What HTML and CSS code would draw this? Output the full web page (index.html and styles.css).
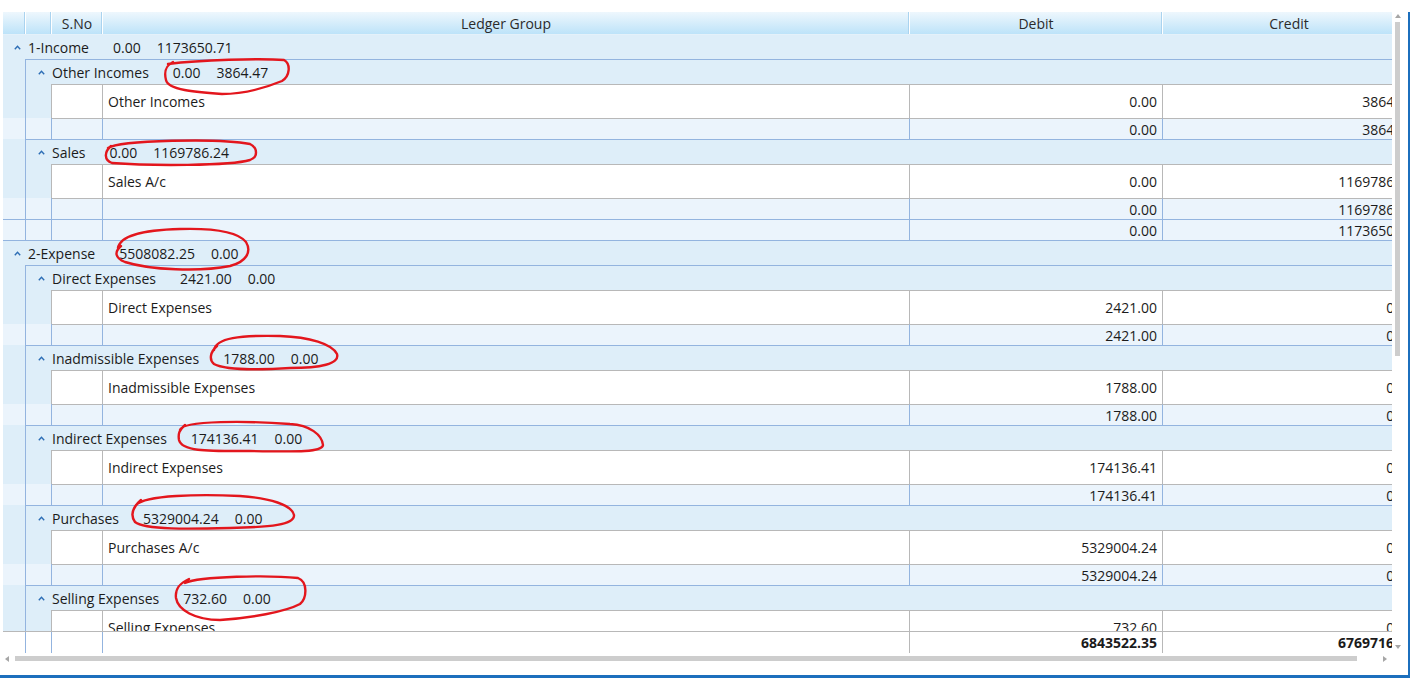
FILE: index.html
```html
<!DOCTYPE html>
<html>
<head>
<meta charset="utf-8">
<link rel="stylesheet" href="styles.css">
</head>
<body>
<div class="frame">
  <div class="area">
    <div class="grid">
      <div class="hdr">
        <div class="hc c0"></div><div class="hc c1"></div><div class="hc sno">S.No</div><div class="hc led">Ledger Group</div><div class="hc deb">Debit</div><div class="hc cre">Credit</div>
      </div>
      <div class="body">
        <div class="row g1 first"><svg class="cap" viewBox="0 0 7 5"><path d="M0.8 4.2 L3.5 1.3 L6.2 4.2"/></svg><span class="lab">1-Income</span><span class="v">0.00</span><span class="v">1173650.71</span></div>

        <div class="row g2"><div class="ind"></div><div class="gc"><svg class="cap" viewBox="0 0 7 5"><path d="M0.8 4.2 L3.5 1.3 L6.2 4.2"/></svg><span class="lab">Other Incomes</span><span class="v">0.00</span><span class="v">3864.47</span></div></div>
        <div class="row data"><div class="ind"></div><div class="ind2"></div><div class="c sno"></div><div class="c led">Other Incomes</div><div class="c deb num">0.00</div><div class="c cre num">3864.47</div></div>
        <div class="row foot"><div class="ind"></div><div class="ind2"></div><div class="c sno"></div><div class="c led"></div><div class="c deb num">0.00</div><div class="c cre num">3864.47</div></div>

        <div class="row g2"><div class="ind"></div><div class="gc"><svg class="cap" viewBox="0 0 7 5"><path d="M0.8 4.2 L3.5 1.3 L6.2 4.2"/></svg><span class="lab">Sales</span><span class="v">0.00</span><span class="v">1169786.24</span></div></div>
        <div class="row data"><div class="ind"></div><div class="ind2"></div><div class="c sno"></div><div class="c led">Sales A/c</div><div class="c deb num">0.00</div><div class="c cre num">1169786.24</div></div>
        <div class="row foot"><div class="ind"></div><div class="ind2"></div><div class="c sno"></div><div class="c led"></div><div class="c deb num">0.00</div><div class="c cre num">1169786.24</div></div>
        <div class="row foot af"><div class="ind"></div><div class="ind2"></div><div class="c sno"></div><div class="c led"></div><div class="c deb num">0.00</div><div class="c cre num">1173650.71</div></div>

        <div class="row g1"><svg class="cap" viewBox="0 0 7 5"><path d="M0.8 4.2 L3.5 1.3 L6.2 4.2"/></svg><span class="lab">2-Expense</span><span class="v">5508082.25</span><span class="v">0.00</span></div>

        <div class="row g2"><div class="ind"></div><div class="gc"><svg class="cap" viewBox="0 0 7 5"><path d="M0.8 4.2 L3.5 1.3 L6.2 4.2"/></svg><span class="lab">Direct Expenses</span><span class="v">2421.00</span><span class="v">0.00</span></div></div>
        <div class="row data"><div class="ind"></div><div class="ind2"></div><div class="c sno"></div><div class="c led">Direct Expenses</div><div class="c deb num">2421.00</div><div class="c cre num">0.00</div></div>
        <div class="row foot"><div class="ind"></div><div class="ind2"></div><div class="c sno"></div><div class="c led"></div><div class="c deb num">2421.00</div><div class="c cre num">0.00</div></div>

        <div class="row g2"><div class="ind"></div><div class="gc"><svg class="cap" viewBox="0 0 7 5"><path d="M0.8 4.2 L3.5 1.3 L6.2 4.2"/></svg><span class="lab">Inadmissible Expenses</span><span class="v">1788.00</span><span class="v">0.00</span></div></div>
        <div class="row data"><div class="ind"></div><div class="ind2"></div><div class="c sno"></div><div class="c led">Inadmissible Expenses</div><div class="c deb num">1788.00</div><div class="c cre num">0.00</div></div>
        <div class="row foot"><div class="ind"></div><div class="ind2"></div><div class="c sno"></div><div class="c led"></div><div class="c deb num">1788.00</div><div class="c cre num">0.00</div></div>

        <div class="row g2"><div class="ind"></div><div class="gc"><svg class="cap" viewBox="0 0 7 5"><path d="M0.8 4.2 L3.5 1.3 L6.2 4.2"/></svg><span class="lab">Indirect Expenses</span><span class="v">174136.41</span><span class="v">0.00</span></div></div>
        <div class="row data"><div class="ind"></div><div class="ind2"></div><div class="c sno"></div><div class="c led">Indirect Expenses</div><div class="c deb num">174136.41</div><div class="c cre num">0.00</div></div>
        <div class="row foot"><div class="ind"></div><div class="ind2"></div><div class="c sno"></div><div class="c led"></div><div class="c deb num">174136.41</div><div class="c cre num">0.00</div></div>

        <div class="row g2"><div class="ind"></div><div class="gc"><svg class="cap" viewBox="0 0 7 5"><path d="M0.8 4.2 L3.5 1.3 L6.2 4.2"/></svg><span class="lab">Purchases</span><span class="v">5329004.24</span><span class="v">0.00</span></div></div>
        <div class="row data"><div class="ind"></div><div class="ind2"></div><div class="c sno"></div><div class="c led">Purchases A/c</div><div class="c deb num">5329004.24</div><div class="c cre num">0.00</div></div>
        <div class="row foot"><div class="ind"></div><div class="ind2"></div><div class="c sno"></div><div class="c led"></div><div class="c deb num">5329004.24</div><div class="c cre num">0.00</div></div>

        <div class="row g2"><div class="ind"></div><div class="gc"><svg class="cap" viewBox="0 0 7 5"><path d="M0.8 4.2 L3.5 1.3 L6.2 4.2"/></svg><span class="lab">Selling Expenses</span><span class="v">732.60</span><span class="v">0.00</span></div></div>
        <div class="row data"><div class="ind"></div><div class="ind2"></div><div class="c sno"></div><div class="c led">Selling Expenses</div><div class="c deb num">732.60</div><div class="c cre num">0.00</div></div>
        <div class="row foot"><div class="ind"></div><div class="ind2"></div><div class="c sno"></div><div class="c led"></div><div class="c deb num">732.60</div><div class="c cre num">0.00</div></div>
      </div>
      <div class="row total"><div class="ind"></div><div class="ind2"></div><div class="c sno"></div><div class="c led"></div><div class="c deb num">6843522.35</div><div class="c cre num">6769716.96</div></div>
      <div class="hscroll">
        <svg class="arr" viewBox="0 0 4 6"><path d="M4 0 L0 3 L4 6Z"/></svg>
        <div class="hthumb"></div>
        <svg class="arr arr-r" viewBox="0 0 4 6"><path d="M0 0 L4 3 L0 6Z"/></svg>
      </div>
    </div>
    <div class="vscroll">
      <svg class="varr" viewBox="0 0 6 4"><path d="M0 4 L3 0 L6 4Z"/></svg>
      <div class="vthumb"></div>
      <svg class="varr varr-d" viewBox="0 0 6 4"><path d="M0 0 L3 4 L6 0Z"/></svg>
    </div>
  </div>
</div>
<div class="bluebar"></div>

<svg class="marks" viewBox="0 0 1410 678">
  <path d="M168 64 C200 60 260 58 284 60 C291 64 290 76 282 81 C265 88 245 94 222 94 C195 92 168 90 166 80 C164 72 165 66 173 62"/>
  <path d="M108 148 C120 140 220 138 250 144 C258 148 258 157 250 160 C230 166 150 166 112 163 C104 160 104 152 111 146"/>
  <path d="M118 248 C120 236 140 230 180 229 C215 228 238 232 246 242 C252 252 246 262 230 266 C200 272 150 270 125 262 C115 258 114 252 121 246"/>
  <path d="M214 350 C216 338 240 335 280 336 C310 337 332 344 337 354 C340 364 320 368 290 368 C260 370 225 370 214 364 C209 360 210 352 217 346"/>
  <path d="M180 430 C182 420 250 421 290 424 C310 425 322 435 323 445 C322 452 300 452 250 451 C210 451 182 452 179 440 C178 434 179 430 185 425"/>
  <path d="M136 505 C145 495 200 494 240 496 C270 498 292 505 294 515 C295 525 270 527 230 528 C190 529 145 530 135 522 C130 515 132 508 141 500"/>
  <path d="M185 583 C200 576 270 575 298 578 C308 582 307 598 300 604 C285 612 250 618 220 620 C195 620 178 610 176 598 C175 590 178 584 189 579"/>
</svg>
</body>
</html>
```

FILE: styles.css
```css
* { box-sizing: border-box; }
html, body { margin: 0; padding: 0; }
body {
  width: 1410px;
  height: 678px;
  background: #fff;
  font-family: "Open Sans", "Noto Sans", sans-serif;
  font-size: 14px;
  color: #1b1b1b;
  overflow: hidden;
  position: relative;
}
.frame { height: 675px; padding: 12px 0 0 3px; }
.area {
  display: flex;
  width: 1407px;
  height: 663px;
  border-right: 2px solid #1c6fbd;
}
.grid {
  width: 1389px;
  display: flex;
  flex-direction: column;
  overflow: hidden;
  flex-shrink: 0;
}
.hdr, .row { display: flex; width: 1413px; flex-shrink: 0; }
.hdr { height: 23px; border-bottom: 1px solid #e4f1fa; }
.hc {
  flex-shrink: 0;
  height: 22px;
  display: flex;
  align-items: center;
  justify-content: center;
  background: linear-gradient(#eef7fd, #bde3f9);
  border-right: 1px solid #fff;
  box-shadow: inset -1px 0 0 #aad3ef;
  color: #2b2b2b;
}
.c0 { width: 23px; }
.c1 { width: 26px; }
.sno { width: 51px; }
.led { width: 807px; }
.deb { width: 253px; }
.cre { width: 253px; }

.body { height: 596px; overflow: hidden; flex-shrink: 0; }

.cap { width: 7px; height: 5px; margin-right: 7px; flex-shrink: 0; }
.cap path { fill: none; stroke: #2c6db5; stroke-width: 1.4; }
.lab { margin-right: 24px; white-space: nowrap; }
.v { white-space: nowrap; }
.v + .v { margin-left: 16px; }

.g1 {
  height: 25px;
  border-top: 1px solid #93b4df;
  background: #deeef9;
  align-items: center;
  padding-left: 11px;
}
.g1.first { height: 24px; border-top: 0; }

.ind {
  width: 23px;
  flex-shrink: 0;
  background: #deeef9;
  border-right: 1px solid #93b4df;
}
.ind2 {
  width: 26px;
  flex-shrink: 0;
  background: #deeef9;
  border-right: 1px solid #b8b8b8;
}

.g2 { height: 25px; }
.g2 .gc {
  flex: 1;
  display: flex;
  align-items: center;
  border-top: 1px solid #93b4df;
  background: #deeef9;
  padding-left: 12px;
}

.c {
  flex-shrink: 0;
  display: flex;
  align-items: center;
  padding: 0 5px;
  white-space: nowrap;
  overflow: hidden;
}
.num { justify-content: flex-end; }
.c.cre { padding-right: 1px; }

.data { height: 34px; }
.data .c {
  background: #fff;
  border-top: 1px solid #b8b8b8;
  border-right: 1px solid #b8b8b8;
}

.foot { height: 21px; }
.foot .ind, .foot .ind2 { background: #ebf4fc; border-right-color: #93b4df; }
.foot .c {
  background: #ebf4fc;
  border-top: 1px solid #b8b8b8;
  border-right: 1px solid #93b4df;
}
.foot.af .c, .foot.af .ind, .foot.af .ind2 { border-top: 1px solid #93b4df; }

.total { height: 22px; border-top: 1px solid #b8b8b8; background: #fff; }
.total .ind, .total .ind2 { background: #fff; border-right-color: #93b4df; }
.total .c { border-right: 1px solid #b8b8b8; font-weight: bold; }
.total .sno { border-right-color: #93b4df; }

.hscroll {
  height: 11px;
  display: flex;
  align-items: center;
  flex-shrink: 0;
}
.arr { width: 4px; height: 6px; margin-left: 2px; flex-shrink: 0; }
.arr path, .varr path { fill: #a6a6a6; }
.hthumb {
  width: 1342px;
  height: 5px;
  margin-left: 6px;
  background: #cdcdcd;
  flex-shrink: 0;
}
.arr.arr-r { margin-left: 26px; }

.vscroll {
  width: 11px;
  height: 641px;
  display: flex;
  flex-direction: column;
  align-items: center;
  flex-shrink: 0;
  padding-top: 2px;
}
.varr { width: 6px; height: 4px; flex-shrink: 0; }
.vthumb {
  width: 5px;
  height: 334px;
  margin-top: 4px;
  background: #cdcdcd;
}
.varr.varr-d { margin-top: auto; margin-bottom: 4px; }

.bluebar { height: 3px; background: #1c6fbd; }

.marks {
  position: absolute;
  left: 0;
  top: 0;
  width: 1410px;
  height: 678px;
  pointer-events: none;
}
.marks path {
  fill: none;
  stroke: #e3161d;
  stroke-width: 2.4;
  stroke-linecap: round;
  stroke-linejoin: round;
}
```
